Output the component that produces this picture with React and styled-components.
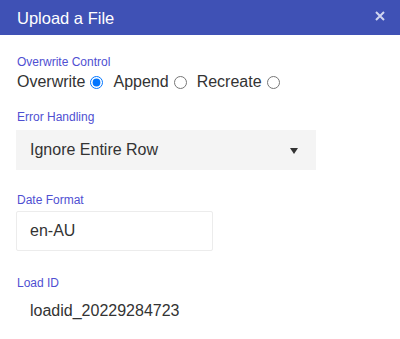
import React from "react";
import styled, { createGlobalStyle } from "styled-components";

const Global = createGlobalStyle`
  html, body { margin: 0; padding: 0; background: #fff; }
  body { font-family: "Liberation Sans", Arial, sans-serif; }
`;

const Dialog = styled.div`
  width: 400px;
  height: 339px;
  background: #fff;
  overflow: hidden;
`;

const Header = styled.div`
  height: 35px;
  background: #3f51b5;
  display: flex;
  align-items: center;
  justify-content: space-between;
  padding: 0 15px 0 17px;
  box-sizing: border-box;
`;

const Title = styled.div`
  color: #fff;
  font-size: 16.5px;
  padding-top: 1px;
`;

const Close = styled.button`
  border: 0;
  background: transparent;
  padding: 0;
  width: 10px;
  height: 10px;
  margin-bottom: 3px;
  display: flex;
  cursor: pointer;
`;

const Body = styled.div`
  padding: 20px 16px 0 16px;
  display: flex;
  flex-direction: column;
`;

const Field = styled.div`
  display: flex;
  flex-direction: column;
  margin-bottom: ${(p) => p.$mb || 0}px;
`;

const Label = styled.div`
  color: #4f4fd2;
  font-size: 12px;
  line-height: 14px;
  padding-left: 1px;
  margin-bottom: ${(p) => p.$mb || 0}px;
`;

const RadioRow = styled.div`
  display: flex;
  align-items: center;
  font-size: 16px;
  color: #333;
  line-height: 20px;
  padding-left: 1px;
`;

const RadioOption = styled.label`
  display: flex;
  align-items: center;
  margin-right: 10px;
`;

const Radio = styled.input`
  margin: 0 0 0 5px;
  width: 13px;
  height: 13px;
`;

const Select = styled.div`
  width: 300px;
  height: 40px;
  background: #f4f4f4;
  display: flex;
  align-items: center;
  justify-content: space-between;
  padding: 0 18px 0 14px;
  box-sizing: border-box;
  font-size: 16px;
  color: #333;
`;

const Caret = styled.span`
  width: 0;
  height: 0;
  border-left: 4px solid transparent;
  border-right: 4px solid transparent;
  border-top: 6px solid #333;
  margin-top: 1px;
`;

const TextBox = styled.div`
  width: 197px;
  height: 40px;
  border: 1px solid #ececec;
  border-radius: 2px;
  display: flex;
  align-items: center;
  padding: 0 13px;
  box-sizing: border-box;
  font-size: 16px;
  color: #333;
`;

const PlainValue = styled.div`
  height: 42px;
  display: flex;
  align-items: center;
  padding-left: 14px;
  font-size: 16px;
  color: #333;
`;

export default function App() {
  return (
    <>
      <Global />
      <Dialog>
        <Header>
          <Title>Upload a File</Title>
          <Close aria-label="close">
            <svg width="10" height="10" viewBox="0 0 10 10">
              <path d="M1 1 L9 9 M9 1 L1 9" stroke="#d0d5f0" strokeWidth="2" strokeLinecap="butt" />
            </svg>
          </Close>
        </Header>
        <Body>
          <Field $mb={18}>
            <Label $mb={3}>Overwrite Control</Label>
            <RadioRow>
              <RadioOption>
                Overwrite
                <Radio type="radio" name="ow" defaultChecked />
              </RadioOption>
              <RadioOption>
                Append
                <Radio type="radio" name="ow" />
              </RadioOption>
              <RadioOption>
                Recreate
                <Radio type="radio" name="ow" />
              </RadioOption>
            </RadioRow>
          </Field>
          <Field $mb={23}>
            <Label $mb={6}>Error Handling</Label>
            <Select>
              <span>Ignore Entire Row</span>
              <Caret />
            </Select>
          </Field>
          <Field $mb={25}>
            <Label $mb={4}>Date Format</Label>
            <TextBox>en-AU</TextBox>
          </Field>
          <Field>
            <Label>Load ID</Label>
            <PlainValue>loadid_20229284723</PlainValue>
          </Field>
        </Body>
      </Dialog>
    </>
  );
}
